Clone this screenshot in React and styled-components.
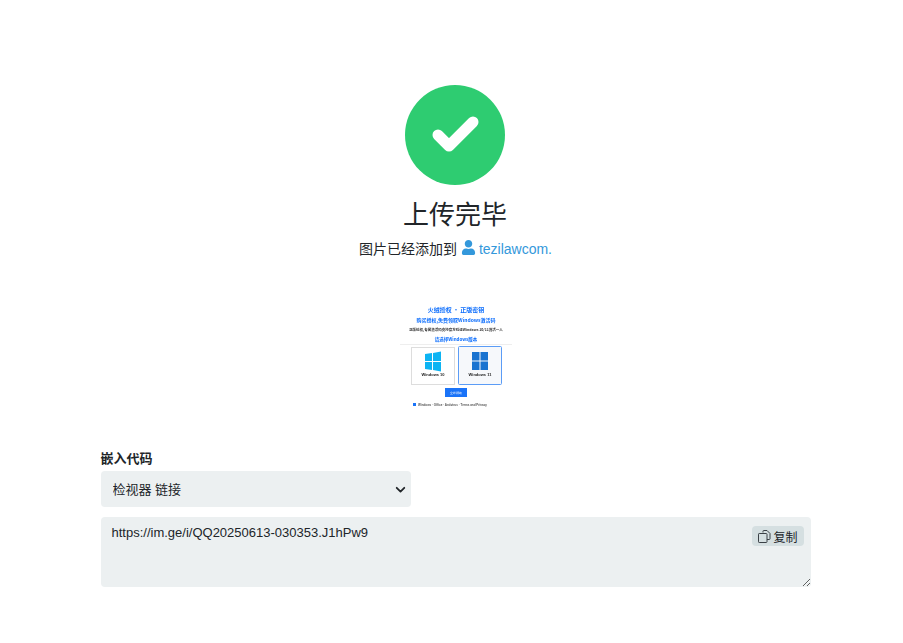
import styled, { createGlobalStyle } from "styled-components";
import { FaUser } from "react-icons/fa";

const GlobalStyle = createGlobalStyle`
body {
  margin: 0;
  background: #fff;
  color: #212529;
  font-family: "Liberation Sans", "Noto Sans CJK SC", sans-serif;
  font-size: 14px;
}
`;

const Page = styled.div`
  width: 710px;
  margin-left: 100.5px;
  padding-top: 85px;
`;

const Hero = styled.div`
  display: flex;
  flex-direction: column;
  align-items: center;
  padding-right: 1px;
`;

const Badge = styled.div`
  width: 100px;
  height: 100px;
  border-radius: 50%;
  background: #2ecc71;
`;

const Title = styled.h1`
  margin: 12px 0 -1px;
  font-size: 26px;
  line-height: 36px;
  font-weight: 400;
`;

const Subtitle = styled.p`
  margin: 7px 0 0 1px;
  font-size: 14px;
  line-height: 21px;
`;

const UserLink = styled.a`
  color: #3498db;
  text-decoration: none;
  svg {
    vertical-align: -1px;
    margin-right: 3px;
  }
`;

const Thumb = styled.svg`
  display: block;
  width: 112px;
  height: 112px;
  margin: 40px 0 0 2px;
  filter: blur(0.3px);
`;

const Field = styled.div`
  margin-top: 38px;
`;

const Label = styled.label`
  display: block;
  font-size: 13px;
  line-height: 18px;
  font-weight: 700;
  margin-bottom: 3px;
`;

const Select = styled.select`
  display: block;
  width: 310px;
  height: 36px;
  padding: 0 12px;
  border: 0;
  border-radius: 4px;
  appearance: none;
  background-color: #ecf0f1;
  background-image: url("data:image/svg+xml,%3Csvg xmlns='http://www.w3.org/2000/svg' viewBox='0 0 16 16'%3E%3Cpath fill='none' stroke='%23212529' stroke-width='2.6' stroke-linecap='round' stroke-linejoin='round' d='M2.500 5.500 8 11l5.500-5.500'/%3E%3C/svg%3E");
  background-repeat: no-repeat;
  background-position: right 5px center;
  background-size: 11px 11px;
  color: #212529;
  font: inherit;
  font-size: 13px;
`;

const CodeBox = styled.div`
  position: relative;
  margin-top: 10px;
`;

const Code = styled.textarea`
  display: block;
  width: 100%;
  height: 70px;
  box-sizing: border-box;
  padding: 7px 11px;
  border: 0;
  border-radius: 4px;
  background: #ecf0f1;
  color: #212529;
  font: inherit;
  font-size: 13px;
  line-height: 17px;
`;

const CopyButton = styled.button`
  position: absolute;
  top: 9px;
  right: 7px;
  display: flex;
  align-items: center;
  gap: 2px;
  height: 20px;
  padding: 0 6px;
  border: 0;
  border-radius: 4px;
  background: #d5dfe1;
  color: #212529;
  font: inherit;
  font-size: 12px;
`;

const Check = () => (
  <svg width="100" height="100" viewBox="0 0 100 100">
    <path d="M33 50 L44 61 L68 37" fill="none" stroke="#fff" strokeWidth="11" strokeLinecap="round" strokeLinejoin="round" />
  </svg>
);

const CopyIcon = () => (
  <svg width="13" height="13" viewBox="0 0 13 13" fill="none" stroke="#3a4046" strokeWidth="1">
    <path d="M5 2.500V1.200a.7.7 0 0 1 .7-.7h3.300l3 3v5.300a.7.7 0 0 1-.7.7H9" />
    <path d="M1.200 3.500H8.300a.7.7 0 0 1 .7.7v7.600a.7.7 0 0 1-.7.7H1.200a.7.7 0 0 1-.7-.7V4.200a.7.7 0 0 1 .7-.7z" />
  </svg>
);

const Thumbnail = () => (
  <Thumb viewBox="0 0 112 112">
    <g fontFamily="'Noto Sans CJK SC', sans-serif" textAnchor="middle" fill="#0d6efd" fontWeight="700">
      <text x="56" y="12" fontSize="6">火绒授权 · 正版密钥</text>
      <text x="56" y="22" fontSize="5">购买授权,免费领取Windows激活码</text>
      <text x="56" y="31" fontSize="3.500" fill="#333">正版授权,专属激活码支持官方验证Windows 10/11激活一人</text>
      <text x="56" y="41" fontSize="4.500">请选择Windows版本</text>
    </g>
    <rect x="0" y="44" width="112" height="1" fill="#eee" />
    <rect x="11.500" y="47.500" width="43" height="37" fill="#fff" stroke="#ddd" />
    <rect x="58.500" y="46.500" width="43" height="38" rx="1" fill="#f6f8fb" stroke="#5b9cf6" />
    <path d="M25 54l7-1v8h-7zM33 53l8-1.500V61h-8zM25 62h7v8l-7-1zM33 62h8v9.500l-8-1.500z" fill="#0db4f3" />
    <path d="M72 52h7.500v8.500H72zM80.500 52H88v8.500h-7.500zM72 61.500h7.500V70H72zM80.500 61.500H88V70h-7.500z" fill="#1a73d0" />
    <g fontFamily="'Liberation Sans', sans-serif" textAnchor="middle" fill="#222" fontSize="4" fontWeight="700">
      <text x="33" y="76">Windows 10</text>
      <text x="80" y="76">Windows 11</text>
    </g>
    <rect x="45" y="88" width="22" height="9" fill="#1a73f8" />
    <text x="56" y="94" fontSize="3" fill="#fff" textAnchor="middle" fontFamily="'Liberation Sans', sans-serif">立即领取</text>
    <rect x="13" y="103" width="3" height="3" fill="#1a73f8" />
    <text x="18" y="106" fontSize="3" fill="#555" fontWeight="700" fontFamily="'Liberation Sans', sans-serif">Windows · Office · Antivirus · Terms and Privacy</text>
  </Thumb>
);

export default function App() {
  return (
    <Page>
      <GlobalStyle />
      <Hero>
        <Badge>
          <Check />
        </Badge>
        <Title>上传完毕</Title>
        <Subtitle>
          图片已经添加到 <UserLink href="#"><FaUser size={15} />tezilawcom.</UserLink>
        </Subtitle>
        <Thumbnail />
      </Hero>
      <Field>
        <Label>嵌入代码</Label>
        <Select defaultValue="viewer">
          <option value="viewer">检视器 链接</option>
        </Select>
        <CodeBox>
          <Code readOnly value="https://im.ge/i/QQ20250613-030353.J1hPw9" />
          <CopyButton><CopyIcon />复制</CopyButton>
        </CodeBox>
      </Field>
    </Page>
  );
}
